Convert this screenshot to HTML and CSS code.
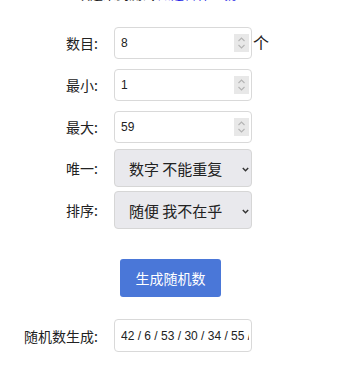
FILE: index.html
```html
<!DOCTYPE html>
<html lang="zh">
<head>
<meta charset="utf-8">
<link rel="stylesheet" href="styles.css">
</head>
<body>
<div class="page">
  <p class="intro">欢迎来到测试 <a class="link" href="#">知道合什么就业!</a></p>

  <div class="row row-first">
    <span class="label">数目:</span>
    <div class="field">
      <span class="value">8</span>
      <span class="spin"><svg width="9" height="14" viewBox="0 0 9 14"><path d="M1.5 5 L4.5 2 L7.5 5 M1.5 9 L4.5 12 L7.5 9" fill="none" stroke="#b4b4b4" stroke-width="1.1"/></svg></span>
    </div>
    <span class="unit">个</span>
  </div>

  <div class="row row-num">
    <span class="label">最小:</span>
    <div class="field">
      <span class="value">1</span>
      <span class="spin"><svg width="9" height="14" viewBox="0 0 9 14"><path d="M1.5 5 L4.5 2 L7.5 5 M1.5 9 L4.5 12 L7.5 9" fill="none" stroke="#b4b4b4" stroke-width="1.1"/></svg></span>
    </div>
  </div>

  <div class="row row-num">
    <span class="label">最大:</span>
    <div class="field">
      <span class="value">59</span>
      <span class="spin"><svg width="9" height="14" viewBox="0 0 9 14"><path d="M1.5 5 L4.5 2 L7.5 5 M1.5 9 L4.5 12 L7.5 9" fill="none" stroke="#b4b4b4" stroke-width="1.1"/></svg></span>
    </div>
  </div>

  <div class="row row-sel1">
    <span class="label">唯一:</span>
    <div class="select">
      <span class="sel-text">数字 不能重复</span>
      <svg class="caret" width="7" height="5" viewBox="0 0 7 5"><path d="M0.8 1 L3.5 3.8 L6.2 1" fill="none" stroke="#333" stroke-width="1.4"/></svg>
    </div>
  </div>

  <div class="row row-sel2">
    <span class="label">排序:</span>
    <div class="select">
      <span class="sel-text">随便 我不在乎</span>
      <svg class="caret" width="7" height="5" viewBox="0 0 7 5"><path d="M0.8 1 L3.5 3.8 L6.2 1" fill="none" stroke="#333" stroke-width="1.4"/></svg>
    </div>
  </div>

  <div class="btn-row">
    <button class="btn">生成随机数</button>
  </div>

  <div class="row row-result">
    <span class="label">随机数生成:</span>
    <div class="field result">
      <span class="value">42 / 6 / 53 / 30 / 34 / 55 / 12 / 7</span>
    </div>
  </div>
</div>
</body>
</html>
```

FILE: styles.css
```css
html, body {
  margin: 0;
  padding: 0;
  background: #fff;
}
body {
  font-family: "Noto Sans CJK SC", "Noto Sans", sans-serif;
  color: #222;
  width: 360px;
  height: 367px;
  overflow: hidden;
}
.page {
  display: flex;
  flex-direction: column;
}
.intro {
  margin: -16px 0 0 77px;
  height: 20px;
  font-size: 13px;
  line-height: 20px;
  color: #222;
  white-space: nowrap;
}
.link {
  color: #2a2ae6;
  text-decoration: none;
}
.row {
  display: flex;
  align-items: center;
}
.label {
  width: 98px;
  text-align: right;
  font-size: 14px;
  color: #222;
  margin-right: 16px;
  white-space: nowrap;
}
.field {
  box-sizing: border-box;
  width: 138px;
  height: 32px;
  border: 1px solid #d9d9d9;
  border-radius: 4px;
  display: flex;
  align-items: center;
  padding-left: 6px;
  padding-right: 2px;
  overflow: hidden;
  background: #fff;
}
.value {
  flex: 1;
  font-family: "Liberation Sans", "Noto Sans", sans-serif;
  font-size: 12px;
  color: #222;
  white-space: nowrap;
  overflow: hidden;
}
.spin {
  width: 15px;
  height: 18px;
  background: #e8e8e8;
  display: flex;
  align-items: center;
  justify-content: center;
}
.unit {
  font-size: 16px;
  color: #222;
  margin-left: 1px;
  margin-top: -3px;
}
.row-first { margin-top: 23px; }
.row-num { margin-top: 10px; }
.row-sel1 { margin-top: 6px; }
.row-sel2 { margin-top: 4px; }
.select {
  box-sizing: border-box;
  width: 138px;
  height: 38px;
  border: 1px solid #d6d6d6;
  border-radius: 4px;
  background: #e9e9ed;
  display: flex;
  align-items: center;
  padding-left: 14px;
  padding-right: 2px;
}
.sel-text {
  flex: 1;
  font-size: 15px;
  color: #222;
  white-space: nowrap;
}
.caret {
  margin-top: 2px;
}
.btn-row {
  margin-top: 30px;
  padding-left: 120px;
}
.btn {
  width: 101px;
  height: 38px;
  border: none;
  border-radius: 3px;
  background: #4a77d8;
  color: #fff;
  font-family: "Noto Sans CJK SC", "Noto Sans", sans-serif;
  font-size: 14px;
  padding: 0;
}
.row-result { margin-top: 22px; }
.result {
  height: 33px;
  padding-left: 6px;
}
```
